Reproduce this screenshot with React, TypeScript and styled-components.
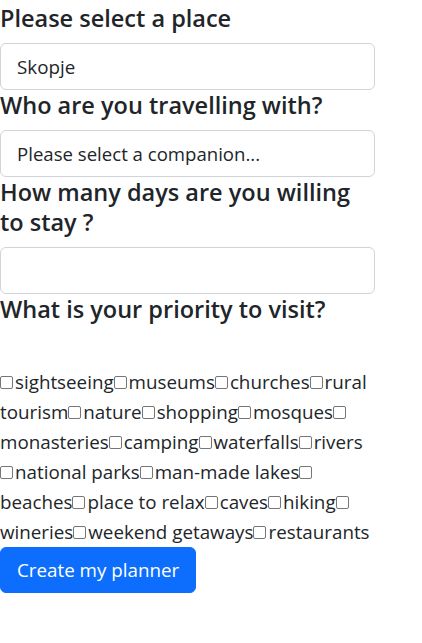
import React from 'react';
import styled, { createGlobalStyle } from 'styled-components';

const GlobalStyle = createGlobalStyle`
  body {
    margin: 0;
    background: #fff;
    color: #212529;
    font-family: "Open Sans", "Noto Sans", sans-serif;
  }
  * { box-sizing: border-box; }
`;

const priorities = [
  'sightseeing',
  'museums',
  'churches',
  'rural tourism',
  'nature',
  'shopping',
  'mosques',
  'monasteries',
  'camping',
  'waterfalls',
  'rivers',
  'national parks',
  'man-made lakes',
  'beaches',
  'place to relax',
  'caves',
  'hiking',
  'wineries',
  'weekend getaways',
  'restaurants',
];

const Planner: React.FC = () => {
  return (
    <Form onSubmit={(e) => e.preventDefault()}>
      <Title>Please select a place</Title>
      <TextInput defaultValue="Skopje" />

      <Title>Who are you travelling with?</Title>
      <Select defaultValue="">
        <option value="">Please select a companion...</option>
        <option value="alone">Alone</option>
        <option value="family">Family</option>
        <option value="friends">Friends</option>
      </Select>

      <Title>How many days are you willing to stay ?</Title>
      <TextInput type="number" />

      <Title>What is your priority to visit?</Title>
      <Checks>
        {priorities.map((p) => (
          <React.Fragment key={p}>
            <Check type="checkbox" id={p} />
            <CheckLabel htmlFor={p}>{p}</CheckLabel>
          </React.Fragment>
        ))}
      </Checks>

      <SubmitBtn type="submit">Create my planner</SubmitBtn>
    </Form>
  );
};

const Form = styled.form`
  width: 375px;
  padding-top: 3px;
`;

/* headings, bootstrap h2-ish */
const Title = styled.h2`
  margin: 0 0 10px;
  font-size: 23.5px;
  font-weight: 600;
  line-height: 30px;
  color: #212529;
`;

const TextInput = styled.input`
  display: block;
  width: 100%;
  height: 47px;
  padding: 0 16px;
  font-family: inherit;
  font-size: 18.8px;
  color: #212529;
  border: 1px solid #ced4da;
  border-radius: 6px;
  background: #fff;
  outline: none;
  appearance: none;
  -moz-appearance: textfield;
  &::-webkit-outer-spin-button,
  &::-webkit-inner-spin-button {
    -webkit-appearance: none;
    margin: 0;
  }
`;

const Select = styled.select`
  display: block;
  width: 100%;
  height: 47px;
  padding: 0 16px;
  font-family: inherit;
  font-size: 18.6px;
  color: #212529;
  border: 1px solid #ced4da;
  border-radius: 6px;
  background: #fff;
  appearance: none;
  outline: none;
`;

const Checks = styled.div`
  margin-top: 43px;
  font-size: 18.8px;
  line-height: 30px;
`;

/* small grey native-looking box */
const Check = styled.input`
  appearance: none;
  display: inline-block;
  width: 13px;
  height: 13px;
  margin: 0 2px 0 0;
  vertical-align: baseline;
  border: 1px solid #767676;
  border-radius: 2px;
  background: #fff;
  cursor: pointer;
  &:checked {
    background: #0d6efd;
    border-color: #0d6efd;
  }
`;

const CheckLabel = styled.label`
  color: #212529;
`;

const SubmitBtn = styled.button`
  display: block;
  height: 46px;
  padding: 0 16px;
  font-family: inherit;
  font-size: 18.8px;
  color: #fff;
  background: #0d6efd;
  border: 1px solid #0d6efd;
  border-radius: 6px;
  cursor: pointer;
  &:hover {
    background: #0b5ed7;
  }
`;

export default function App() {
  return (
    <>
      <GlobalStyle />
      <Planner />
    </>
  );
}
